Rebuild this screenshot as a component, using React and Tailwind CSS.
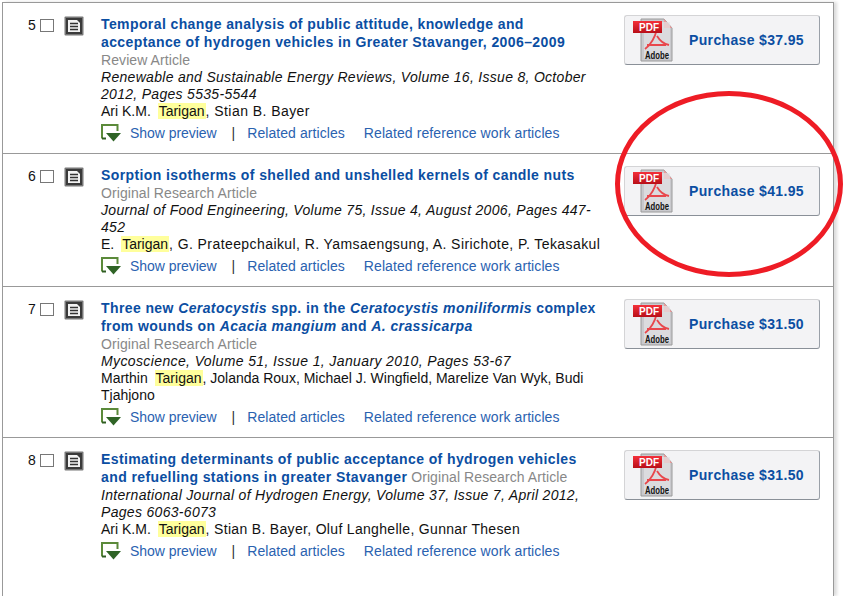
const articles = [
  {
    n: 5,
    title: 'Temporal change analysis of public attitude, knowledge and acceptance of hydrogen vehicles in Greater Stavanger, 2006–2009',
    type: 'Review Article',
    source: 'Renewable and Sustainable Energy Reviews, Volume 16, Issue 8, October 2012, Pages 5535-5544',
    sourceClass: 'tracking-[0.3px]',
    before: 'Ari K.M. ',
    after: ', Stian B. Bayer',
    authorClass: 'tracking-[0.44px]',
    price: '$37.95',
  },
  {
    n: 6,
    title: 'Sorption isotherms of shelled and unshelled kernels of candle nuts',
    type: 'Original Research Article',
    source: 'Journal of Food Engineering, Volume 75, Issue 4, August 2006, Pages 447-452',
    sourceClass: 'tracking-[0.3px]',
    before: 'E. ',
    after: ', G. Prateepchaikul, R. Yamsaengsung, A. Sirichote, P. Tekasakul',
    authorClass: 'tracking-[0.42px]',
    price: '$41.95',
  },
  {
    n: 7,
    title: (
      <>
        Three new <i>Ceratocystis</i> spp. in the <i>Ceratocystis moniliformis</i> complex from wounds on <i>Acacia mangium</i> and <i>A. crassicarpa</i>
      </>
    ),
    type: 'Original Research Article',
    source: 'Mycoscience, Volume 51, Issue 1, January 2010, Pages 53-67',
    sourceClass: 'tracking-[0.38px]',
    before: 'Marthin ',
    after: ', Jolanda Roux, Michael J. Wingfield, Marelize Van Wyk, Budi Tjahjono',
    authorClass: 'tracking-[0px]',
    price: '$31.50',
  },
  {
    n: 8,
    title: 'Estimating determinants of public acceptance of hydrogen vehicles and refuelling stations in greater Stavanger',
    inlineType: true,
    type: 'Original Research Article',
    source: 'International Journal of Hydrogen Energy, Volume 37, Issue 7, April 2012, Pages 6063-6073',
    sourceClass: 'tracking-[0.31px]',
    before: 'Ari K.M. ',
    after: ', Stian B. Bayer, Oluf Langhelle, Gunnar Thesen',
    authorClass: 'tracking-[0.32px]',
    price: '$31.50',
  },
]

function DocIcon() {
  return (
    <svg width="20" height="20" viewBox="0 0 20 20" className="shrink-0">
      <rect x="0.5" y="0.5" width="19" height="19" rx="1" fill="#777" />
      <rect x="2" y="2" width="16" height="16" fill="#3a3a3a" />
      <path d="M4 4h9l3 3v9H4z" fill="#f2f2f2" />
      <path d="M6 7.5h8M6 10.5h8M6 13.5h8" stroke="#333" strokeWidth="1.6" />
    </svg>
  )
}

function PreviewIcon() {
  return (
    <svg width="20" height="19" viewBox="0 0 20 19" className="shrink-0">
      <path d="M1 14.5V1h15.5v6" fill="none" stroke="#5b8a3a" strokeWidth="2" />
      <path d="M1 14.5h4" fill="none" stroke="#2f5d22" strokeWidth="2" />
      <path d="M5 9h15l-7.5 8.5z" fill="#2f6426" />
    </svg>
  )
}

function PdfIcon({ id }) {
  return (
    <svg width="42" height="44" viewBox="0 0 42 44" className="shrink-0">
      <defs>
        <linearGradient id={`tab${id}`} x1="0" y1="0" x2="0" y2="1">
          <stop offset="0" stopColor="#f4303a" />
          <stop offset="1" stopColor="#b80f18" />
        </linearGradient>
      </defs>
      <path d="M9 1h23l8 9v33H9z" fill="#c9c9cd" stroke="#9a9a9a" />
      <path d="M32 1l8 9h-8z" fill="#e99" />
      <path d="M12 4h26v36H12z" fill="#e2e2e6" opacity="0.7" />
      <path d="M25 11c-2 8-5 15-12 20M25 18c3 5 7 8 12 9M15 27h19" fill="none" stroke="#e8474c" strokeWidth="1.8" />
      <rect x="1" y="3" width="29" height="12" fill={`url(#tab${id})`} />
      <text x="7" y="13" fontSize="10" fontWeight="700" fill="#fff" fontFamily="Liberation Sans, sans-serif">PDF</text>
      <text x="13" y="41" fontSize="10" fontWeight="700" fill="#111" textLength="24" lengthAdjust="spacingAndGlyphs" fontFamily="Liberation Sans, sans-serif">Adobe</text>
    </svg>
  )
}

function Article({ a }) {
  return (
    <div className="flex h-[151px] border-b border-[#999] pt-3 pl-6 [&:nth-child(2)]:h-[133px] [&:last-child]:h-auto [&:last-child]:border-b-0">
      <div className="flex w-[74px] shrink-0 items-start">
        <span className="mt-[2px] w-[13px] pl-[1px] text-sm leading-[17px] text-[#111]">{a.n}</span>
        <span className="mt-1 h-[13px] w-[14px] shrink-0 border border-[#777] bg-white" />
        <span className="mt-[1px] ml-[10px]"><DocIcon /></span>
      </div>
      <div className="w-[497px] shrink-0">
        <div className="mb-[1px] text-sm leading-[18px] font-bold tracking-[0.4px] text-[#0b4ea2]">
          {a.title}
          {a.inlineType ? <span className="font-normal tracking-[0.08px] text-[#888]"> {a.type}</span> : null}
        </div>
        {a.inlineType ? null : <div className="text-sm leading-[17px] tracking-[0.08px] text-[#888]">{a.type}</div>}
        <div className={`text-sm leading-[17px] text-[#111] italic ${a.sourceClass}`}>{a.source}</div>
        <div className="mr-[-6px] text-sm leading-[17px] text-[#111]">
          {a.before} <span className="ml-[3px] bg-[#ffff9c] px-[1px]">Tarigan</span><span className={a.authorClass}>{a.after}</span>
        </div>
        <div className="mt-[4px] flex items-center text-sm leading-[17px] text-[#2a62b0]">
          <PreviewIcon />
          <span className="ml-[9px] tracking-[-0.05px]">Show preview</span>
          <span className="ml-[15px] text-[#333]">|</span>
          <span className="ml-[12px] tracking-[0.07px]">Related articles</span>
          <span className="ml-[19px] tracking-[0.09px]">Related reference work articles</span>
        </div>
      </div>
      <div className="ml-[26px] flex h-[50px] w-[196px] shrink-0 items-center rounded-[3px] border border-[#d4d4d6] border-r-[#9aa0a8] border-b-[#8a9098] bg-[#f3f3f5] pl-[7px]">
        <PdfIcon id={a.n} />
        <span className="ml-[15px] text-sm font-bold tracking-[0.35px] text-[#0b4ea2]">Purchase {a.price}</span>
      </div>
    </div>
  )
}

export default function App() {
  return (
    <div className="relative h-[596px] w-[846px] overflow-hidden bg-white font-['Liberation_Sans',sans-serif]">
      <div className="mt-[2px] ml-[2px] h-[594px] w-[832px] border-t border-r border-l border-[#999] shadow-[3px_0_3px_#ddd]">
        {articles.map((a) => (
          <Article key={a.n} a={a} />
        ))}
      </div>
      <div className="absolute top-[91px] left-[615px] h-[186px] w-[228px] rounded-[50%] border-[5px] border-[#ee1c25]" />
    </div>
  )
}
